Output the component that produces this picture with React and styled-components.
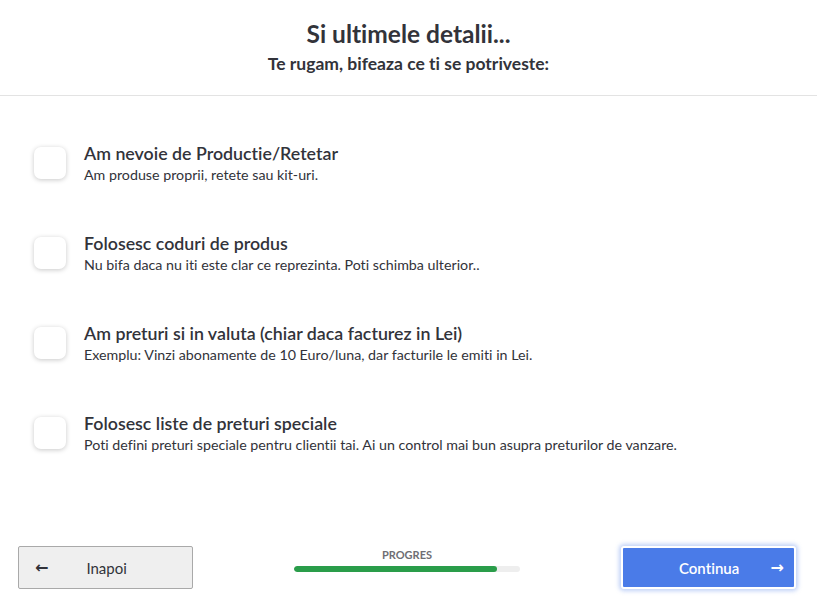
import React from "react";
import styled, { createGlobalStyle } from "styled-components";

const GlobalStyle = createGlobalStyle`
  html, body {
    margin: 0;
    padding: 0;
    background: #ffffff;
    font-family: Lato, "Open Sans", sans-serif;
    font-variant-ligatures: none;
    color: #32333a;
  }
`;

const options = [
  {
    title: "Am nevoie de Productie/Retetar",
    text: "Am produse proprii, retete sau kit-uri.",
  },
  {
    title: "Folosesc coduri de produs",
    text: "Nu bifa daca nu iti este clar ce reprezinta. Poti schimba ulterior..",
  },
  {
    title: "Am preturi si in valuta (chiar daca facturez in Lei)",
    text: "Exemplu: Vinzi abonamente de 10 Euro/luna, dar facturile le emiti in Lei.",
  },
  {
    title: "Folosesc liste de preturi speciale",
    text: "Poti defini preturi speciale pentru clientii tai. Ai un control mai bun asupra preturilor de vanzare.",
  },
];

const App = () => {
  return (
    <Page>
      <GlobalStyle />
      <Header>
        <Title>Si ultimele detalii...</Title>
        <Subtitle>Te rugam, bifeaza ce ti se potriveste:</Subtitle>
      </Header>
      <List>
        {options.map((o) => (
          <Option key={o.title}>
            <Box />
            <div>
              <OptionTitle>{o.title}</OptionTitle>
              <OptionText>{o.text}</OptionText>
            </div>
          </Option>
        ))}
      </List>
      <Footer>
        <Button>
          <Arrow>&larr;</Arrow>
          <span>Inapoi</span>
        </Button>
        <Progress>
          <ProgressLabel>PROGRES</ProgressLabel>
          <Track>
            <Fill style={{ width: "90%" }} />
          </Track>
        </Progress>
        <Button primary>
          <span>Continua</span>
          <Arrow>&rarr;</Arrow>
        </Button>
      </Footer>
    </Page>
  );
};

export default App;

const Page = styled.div`
  width: 817px;
  height: 601px;
  display: flex;
  flex-direction: column;
  box-sizing: border-box;
`;

const Header = styled.div`
  height: 96px;
  border-bottom: 1px solid #e3e3e3;
  display: flex;
  flex-direction: column;
  align-items: center;
  padding-top: 19px;
  box-sizing: border-box;
`;

const Title = styled.div`
  font-size: 24.5px;
  font-weight: 700;
  line-height: 30px;
`;

const Subtitle = styled.div`
  font-size: 17.5px;
  font-weight: 700;
  line-height: 22px;
  margin-top: 4px;
`;

const List = styled.div`
  display: flex;
  flex-direction: column;
  gap: 40px;
  padding: 46px 0 0 34px;
  flex: 1;
`;

const Option = styled.div`
  display: flex;
  align-items: flex-start;
  gap: 18px;
  height: 50px;
`;

const Box = styled.div`
  width: 32px;
  height: 32px;
  margin-top: 5px;
  border-radius: 7px;
  background: #fff;
  box-shadow: 0 1px 5px rgba(0, 0, 0, 0.22);
  flex-shrink: 0;
`;

const OptionTitle = styled.div`
  font-size: 17.8px;
  font-weight: 600;
  line-height: 22px;
  color: #32333a;
`;

const OptionText = styled.div`
  font-size: 14.25px;
  line-height: 18px;
  margin-top: 2px;
  color: #32333a;
`;

const Footer = styled.div`
  display: flex;
  align-items: center;
  justify-content: space-between;
  padding: 0 21px 12px 18px;
`;

const Button = styled.div`
  width: 175px;
  height: 43px;
  box-sizing: border-box;
  display: flex;
  align-items: center;
  font-size: 15px;
  ${(p) =>
    p.primary
      ? `
    background: #4a7be8;
    color: #fff;
    border: 2px solid #fff;
    border-radius: 3px;
    box-shadow: 0 0 4px 2px rgba(74, 123, 232, 0.35);
    font-weight: 600;
    padding: 0 10px 0 56px;
    justify-content: space-between;
  `
      : `
    background: #efefef;
    color: #32333a;
    border: 1px solid #a9a9a9;
    border-radius: 2px;
    padding: 0 0 0 16px;
    gap: 38px;
  `}
`;

const Arrow = styled.span`
  font-size: 16px;
  font-weight: 700;
  font-family: "DejaVu Sans", sans-serif;
`;

const Progress = styled.div`
  display: flex;
  flex-direction: column;
  align-items: center;
  gap: 5px;
  margin-bottom: 16px;
`;

const ProgressLabel = styled.div`
  font-size: 11px;
  font-weight: 700;
  line-height: 13px;
  color: #6e6e73;
`;

const Track = styled.div`
  width: 226px;
  height: 6px;
  border-radius: 3px;
  background: #eeeeee;
  overflow: hidden;
`;

const Fill = styled.div`
  height: 100%;
  background: #2a9d4a;
  border-radius: 3px;
`;
